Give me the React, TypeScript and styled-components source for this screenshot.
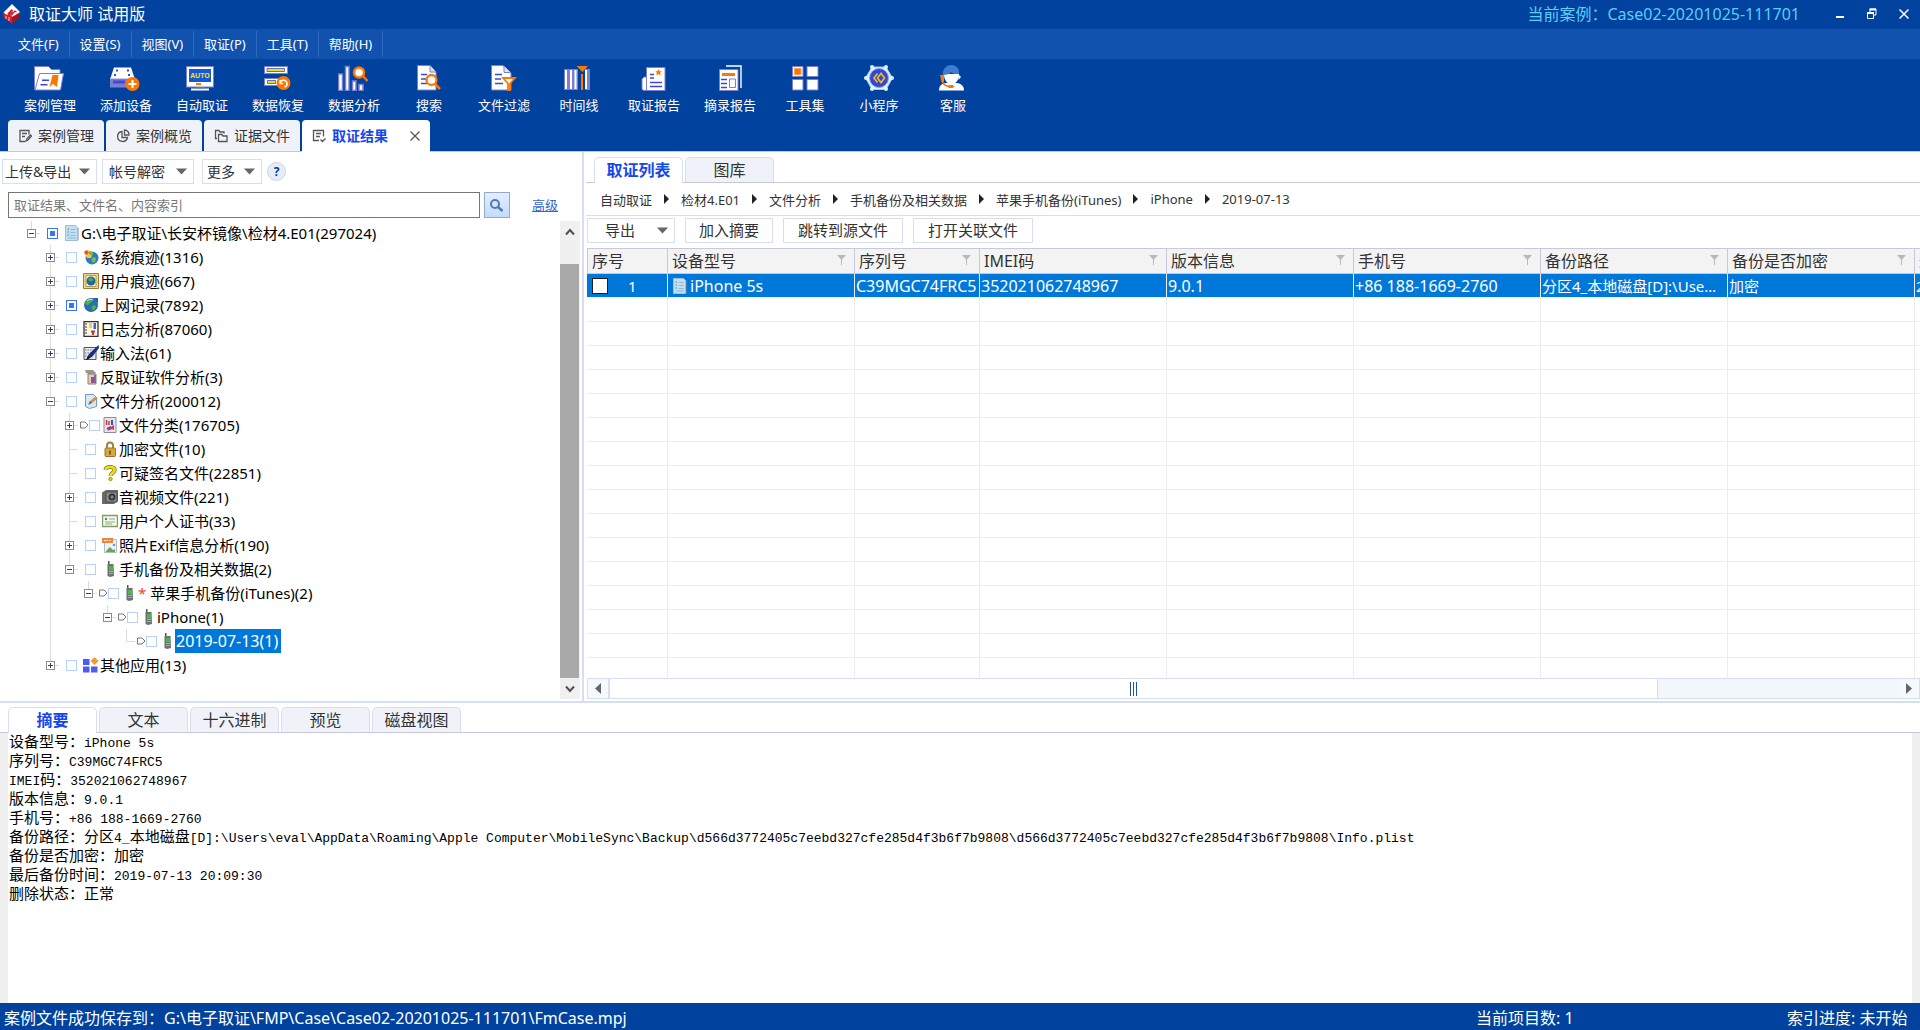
import React from 'react';
import styled, { createGlobalStyle, css } from 'styled-components';

const NAVY = '#00429e';
const LINE = '#d5dff1';
const GREY_LINE = '#c8c8dc';
const SELECT = '#0078d9';
const ACCENT = '#1447ee';

const Global = createGlobalStyle`
  *, *::before, *::after { box-sizing: border-box; }
  body { margin: 0; background: #fff; }
  body, button, input, table {
    font-family: "Noto Sans", "Noto Sans CJK SC", sans-serif;
  }
  button { border: 0; padding: 0; background: none; color: inherit; }
  svg { display: block; flex: none; }
`;

const Window = styled.div`
  display: flex;
  flex-direction: column;
  height: 100vh;
  overflow: hidden;
  color: #333;
`;

/* ---------- title, menu, toolbar ---------- */

const TitleBar = styled.header`
  display: flex;
  align-items: center;
  height: 29px;
  flex: none;
  padding: 0 0 2px 2px;
  background: ${NAVY};
  color: #fff;
  font-size: 16px;
  line-height: 26px;
`;
const AppName = styled.h1`
  margin: 0 auto 0 8px;
  font-size: 16px;
  font-weight: 400;
`;
const CaseName = styled.span`
  margin-right: 24px;
  color: #5ccdf8;
`;
const WinButton = styled.button`
  display: grid;
  place-items: center;
  width: 32px;
  height: 24px;
`;
const MenuBar = styled.nav`
  display: flex;
  align-items: center;
  height: 30px;
  flex: none;
  padding-left: 8px;
  background: #1152ae;
  color: #fff;
`;
const MenuItem = styled.button`
  height: 26px;
  padding: 0 10px;
  border-right: 1px solid #2d68bd;
  font-size: 13px;
  line-height: 26px;
`;
const ToolBar = styled.div`
  display: flex;
  height: 61px;
  flex: none;
  padding: 6px 0 0 12px;
  background: ${NAVY};
  color: #fff;
`;
const Tool = styled.button`
  display: flex;
  flex-direction: column;
  align-items: center;
  gap: 4px;
  min-width: 74px;
  padding: 0 12px;
  font-size: 13px;
  line-height: 20px;
  white-space: nowrap;
`;
const MainTabs = styled.div`
  display: flex;
  gap: 2px;
  height: 32px;
  flex: none;
  padding-left: 8px;
  border-bottom: 1px solid #b9c9e6;
  background: ${NAVY};
`;
const MainTab = styled.div<{ $active?: boolean }>`
  display: flex;
  align-items: center;
  gap: 6px;
  width: ${p => (p.$active ? 128 : 96)}px;
  padding-left: 10px;
  border-radius: 4px 4px 0 0;
  background: ${p => (p.$active ? '#fff' : '#eff3f9')};
  margin-bottom: ${p => (p.$active ? -1 : 0)}px;
`;
const MainTabLabel = styled.button<{ $active?: boolean }>`
  display: flex;
  align-items: center;
  gap: 6px;
  font-size: 14px;
  line-height: 30px;
  font-weight: ${p => (p.$active ? 700 : 400)};
  color: ${p => (p.$active ? ACCENT : '#333')};
  white-space: nowrap;
`;
const CloseTab = styled.button`
  margin: 0 10px 0 auto;
`;

/* ---------- workspace ---------- */

const Work = styled.main`
  display: grid;
  grid-template-columns: 584px minmax(0, 1fr);
  flex: 1;
  min-height: 0;
  border-bottom: 2px solid ${LINE};
`;
const LeftPane = styled.section`
  display: flex;
  flex-direction: column;
  min-height: 0;
  padding: 7px 2px 2px 0;
  border-right: 2px solid ${LINE};
`;
const LeftTools = styled.div`
  display: flex;
  align-items: center;
  gap: 5px;
  padding-left: 2px;
`;
const DropButton = styled.button<{ $w: number; $pad: number; $gap?: number }>`
  display: flex;
  align-items: center;
  justify-content: space-between;
  width: ${p => p.$w}px;
  height: 25px;
  margin-right: ${p => p.$gap ?? 0}px;
  padding: 0 6px 0 ${p => p.$pad}px;
  border: 1px solid ${LINE};
  background: #fff;
  font-size: 14px;
  line-height: 23px;
  white-space: nowrap;
`;
const Help = styled.button`
  width: 19px;
  height: 19px;
  border: 1px solid #c9d6ee;
  border-radius: 50%;
  background: #e6edf8;
  color: #003f9e;
  font-size: 12px;
  font-weight: 700;
  line-height: 17px;
`;
const SearchRow = styled.form`
  display: flex;
  align-items: center;
  gap: 4px;
  margin: 8px 22px 3px 8px;
`;
const SearchInput = styled.input`
  flex: 1;
  height: 26px;
  padding: 0 5px;
  border: 1px solid #777;
  font-size: 13px;
  &::placeholder { color: #777; opacity: 1; }
`;
const SearchButton = styled.button`
  display: grid;
  place-items: center;
  width: 26px;
  height: 26px;
  border: 1px solid #8fabd3;
  background: linear-gradient(#e4eeff, #c4dbff);
`;
const Advanced = styled.a`
  margin-left: 18px;
  color: #3465cf;
  font-size: 13px;
  line-height: 24px;
`;
const TreeWrap = styled.div`
  display: flex;
  flex: 1;
  min-height: 0;
`;
const Tree = styled.ul`
  flex: 1;
  margin: 0;
  padding: 0 0 0 22px;
  list-style: none;
  overflow: hidden;
`;
const TreeRow = styled.li`
  display: flex;
  align-items: center;
  height: 24px;
  color: #000;
`;
const stripe = 'linear-gradient(#dcdcdc, #dcdcdc)';
const guides = {
  none: 'none',
  full: `${stripe} 9px 0 / 1px 24px no-repeat`,
  tee: `${stripe} 9px 0 / 1px 24px no-repeat, ${stripe} 9px 12px / 9px 1px no-repeat`,
  end: `${stripe} 9px 0 / 1px 12px no-repeat, ${stripe} 9px 12px / 9px 1px no-repeat`,
};
const Guide = styled.span<{ $kind: keyof typeof guides }>`
  display: grid;
  place-items: center;
  flex: none;
  width: 19px;
  height: 24px;
  background: ${p => guides[p.$kind]};
`;
const Expander = styled.button`
  display: block;
  width: 9px;
  height: 9px;
  border: 1px solid #8c8c8c;
  background: #fff;
`;
const CheckSlot = styled.span<{ $flag?: boolean }>`
  display: flex;
  align-items: center;
  flex: none;
  width: 23px;
  padding-left: ${p => (p.$flag ? 1 : 6)}px;
`;
const TreeCheck = styled.input<{ $partial?: boolean }>`
  appearance: none;
  flex: none;
  width: 11px;
  height: 11px;
  margin: 0;
  border: 1px solid #b9cffb;
  background: #fff;
  ${p => p.$partial && css`
    border-color: #3a73fb;
    background: linear-gradient(#3a73fb, #3a73fb) center / 5px 5px no-repeat #fff;
  `}
`;
const TreeLabel = styled.label<{ $on?: boolean }>`
  padding: 0 3px 0 1px;
  font-size: ${p => (p.$on ? 16 : 15)}px;
  line-height: 24px;
  white-space: pre;
  ${p => p.$on && css`background: ${SELECT}; color: #fff;`}
`;
const Star = styled.span`
  color: #f23c3c;
`;
const VScroll = styled.div`
  display: flex;
  flex-direction: column;
  width: 20px;
  background: #f0f0f0;
`;
const VArrow = styled.button`
  display: grid;
  place-items: center;
  width: 19px;
  height: 21px;
`;
const VThumb = styled.div`
  flex: 1;
  width: 19px;
  margin-top: 22px;
  background: #a9a9a9;
`;

/* ---------- right pane ---------- */

const RightPane = styled.section`
  display: flex;
  flex-direction: column;
  min-width: 0;
  min-height: 0;
  padding: 5px 0 2px 2px;
`;
const Tabs = styled.div`
  display: flex;
  gap: 2px;
  height: 26px;
  flex: none;
  padding-left: 8px;
  border-bottom: 1px solid ${GREY_LINE};
`;
const Tab = styled.button<{ $active?: boolean }>`
  width: 89px;
  height: ${p => (p.$active ? 26 : 25)}px;
  border: 1px solid ${LINE};
  border-bottom: 0;
  border-radius: 5px 5px 0 0;
  background: ${p => (p.$active ? '#fff' : '#eff3f9')};
  color: ${p => (p.$active ? ACCENT : '#333')};
  font-size: 16px;
  font-weight: ${p => (p.$active ? 700 : 400)};
  line-height: 25px;
`;
const Crumbs = styled.nav`
  display: flex;
  align-items: center;
  gap: 12px;
  height: 33px;
  flex: none;
  padding-left: 14px;
  border-bottom: 1px solid ${LINE};
  font-size: 13px;
`;
const Crumb = styled.a`
  color: #333;
  text-decoration: none;
`;
const ListTools = styled.div`
  display: flex;
  gap: 10px;
  padding: 2px 0 5px 1px;
`;
const ListButton = styled.button<{ $w: number; $drop?: boolean }>`
  display: flex;
  align-items: center;
  justify-content: ${p => (p.$drop ? 'space-between' : 'center')};
  width: ${p => p.$w}px;
  height: 25px;
  padding: ${p => (p.$drop ? '0 6px 0 17px' : 0)};
  border: 1px solid ${LINE};
  font-size: 15px;
  line-height: 23px;
`;
const Grid = styled.div`
  flex: 1;
  min-height: 0;
  margin-left: 1px;
  overflow: hidden;
`;
const DataTable = styled.table`
  width: 1515px;
  table-layout: fixed;
  border-spacing: 0;
  th, td {
    padding: 0;
    overflow: hidden;
    text-align: left;
    white-space: nowrap;
    text-overflow: ellipsis;
  }
  th {
    height: 26px;
    padding: 0 8px 0 4px;
    border: solid ${GREY_LINE};
    border-width: 1px 1px 1px 0;
    background: #f3f3f3;
    font-size: 16px;
    font-weight: 400;
    line-height: 24px;
  }
  th:first-child { border-left-width: 1px; }
  td {
    height: 24px;
    border: solid #ededf0;
    border-width: 0 1px 1px 0;
  }
`;
const HeadCell = styled.div`
  display: flex;
  justify-content: space-between;
  align-items: center;
  svg { margin-bottom: 2px; }
`;
const DataRow = styled.tr`
  td {
    padding: 1px 6px 0 1px;
    background: ${SELECT};
    color: #fff;
    font-size: 15px;
    line-height: 22px;
  }
  td:nth-child(3) { padding-right: 0; }
`;
const Latin = styled.span`
  font-size: 16px;
`;
const CellFlex = styled.label<{ $gap: number; $pad: number }>`
  display: flex;
  align-items: center;
  gap: ${p => p.$gap}px;
  padding-left: ${p => p.$pad}px;
`;
const RowCheck = styled.input`
  appearance: none;
  width: 16px;
  height: 16px;
  margin: 0;
  border: 1px solid #222;
  background: #fff;
`;
const HScroll = styled.div`
  display: flex;
  height: 21px;
  flex: none;
  margin-left: 1px;
  border: 1px solid ${LINE};
`;
const HArrow = styled.button`
  display: grid;
  place-items: center;
  width: 20px;
  background: #f5f8fd;
`;
const HThumb = styled.div`
  display: flex;
  align-items: center;
  justify-content: center;
  gap: 2px;
  flex: 813;
  border: solid ${LINE};
  border-width: 0 1px 0 2px;
  background: #fff;
`;
const Grip = styled.i`
  width: 1px;
  height: 14px;
  background: #1a559f;
`;
const HTrack = styled.div`
  flex: 187;
  background: #f3f6fb;
`;

/* ---------- details and status ---------- */

const Details = styled.section`
  display: flex;
  flex-direction: column;
  height: 300px;
  flex: none;
  padding-top: 4px;
`;
const Summary = styled.div`
  flex: 1;
  padding: 1px 0 0 1px;
  border: solid #f0f0f0;
  border-width: 0 8px;
  color: #000;
  font-family: "Liberation Mono", "Noto Sans CJK SC", monospace;
  font-size: 15px;
`;
const SummaryLine = styled.p`
  height: 19px;
  margin: 0;
  line-height: 20px;
  white-space: pre;
`;
const Mono = styled.span`
  font-size: 13px;
`;
const Status = styled.footer`
  display: grid;
  grid-template-columns: minmax(0, 1fr) 311px 133px;
  height: 27px;
  flex: none;
  padding: 1px 0 0 4px;
  background: ${NAVY};
  color: #fff;
  font-size: 16px;
  line-height: 28px;
`;

/* ---------- drawings ---------- */

const Down = () => (
  <svg width="11" height="7" viewBox="0 0 11 7"><path d="M0 .5h11L5.500 6.500z" fill="#666" /></svg>
);
const Logo = () => (
  <svg width="19" height="20" viewBox="0 0 19 20">
    <path d="M1 10 10 1l8 8v4l-8 6.500L2 14z" fill="#d3202b" />
    <path d="M10 0 1.500 8.500 5 11l4-4 2 1.500L8.500 11l2 2 7.500-5z" fill="#fff" />
    <path d="m6 10 3.500-4 1.500 1.500M9 11.500 13 7l1.500 1" fill="none" stroke="#d3202b" strokeWidth="1.300" />
    <path d="M10 19v-6l8-4v4z" fill="#a5121d" />
    <path d="m4 12 0 3M7 13v4" stroke="#f4b9bd" fill="none" />
  </svg>
);
const B = '#3d49d0';
const P = '#7a80d0';
const O = '#ff7600';

const toolIcons: Record<string, React.ReactNode> = {
  case: <>
    <path d="M.5 25V1.500h14L17.500 4.500H26V9" fill="#fff" stroke={P} />
    <path d="M5.500 8.500h24L26.500 25H1z" fill="#fff" stroke={P} />
    <path d="M8 15.200h7M6.500 19.800h7" stroke={B} strokeWidth="1.500" />
    <path d="M18.500 10h6l-1.500 12-4-3-3.500 3z" fill={O} />
  </>,
  device: <>
    <path d="M4 2.500h17L24.500 13h-24z" fill="#fff" />
    <path d="M6 5.500h2M17 5.500h2M4 10h2M18 10h2" stroke={B} strokeWidth="2" />
    <path d="M0 13h25v9.500H0z" fill={P} />
    <path d="M0 13.500h25" stroke="#fff" strokeOpacity=".6" />
    <path d="M3 17h12" stroke={B} strokeWidth="3" />
    <circle cx="22.500" cy="19" r="7" fill={O} /><path d="M18.500 19h8M22.500 15v8" stroke="#fff" strokeWidth="2" />
  </>,
  auto: <>
    <rect x=".5" y="1.500" width="27" height="20.500" fill="#fff" stroke={P} />
    <rect x="3" y="4" width="22" height="13" fill="#1757dc" />
    <text x="14" y="12.500" fontSize="7" fontWeight="700" textAnchor="middle" fill="#e8e800">AUTO</text>
    <path d="M10 18h5v2h-5z" fill={O} /><path d="M5 24.500h18" stroke="#fff" strokeWidth="2" />
    <path d="M9 23h10" stroke={P} />
  </>,
  restore: <>
    <rect x="2.500" y="1.500" width="23" height="7" fill="#fff" stroke={P} /><path d="M5 5h17" stroke="#e6e022" strokeWidth="3" />
    <path d="M5 3.500h17.500v3H5z" fill="none" stroke={B} strokeWidth=".8" />
    <rect x="2.500" y="13.500" width="16" height="7" fill="#fff" stroke={P} /><path d="M5.500 15.500h8v3h-8z" fill="#e6e022" stroke={B} strokeWidth=".8" />
    <circle cx="21.500" cy="18" r="7" fill={O} />
    <path d="M18 18.500a3.500 3.500 0 1 1 4.500 3.500M18 15v3.500h3" fill="none" stroke="#fff" strokeWidth="1.500" />
  </>,
  analyse: <>
    <path d="M.5 9h4v16.500h-4zM7.500 1.500h3.500v24H7.500zM14.500 16h3.500v9.500h-3.500zM21 19.500h4v6h-4z" fill="#fff" stroke={P} strokeWidth="1.500" />
    <path d="m25 11 4.500 5" stroke={O} strokeWidth="2.500" />
    <circle cx="21" cy="7.500" r="5" fill="#fff" stroke={O} strokeWidth="2.500" />
  </>,
  search: <>
    <path d="M4.500.5H17l6 6.500V25H4.500z" fill="#fff" stroke={P} /><path d="M17 .5V7h6" fill="#dfe2f8" stroke={P} />
    <path d="M8 9.500h6M8 14h5M8 18.500h6" stroke={B} strokeWidth="1.600" />
    <path d="m22 19 5 5" stroke={O} strokeWidth="2.500" />
    <circle cx="18.500" cy="15" r="5" fill="#fff" stroke={O} strokeWidth="2.300" />
  </>,
  filter: <>
    <path d="M3.500.5H15L23 8v17H3.500z" fill="#fff" stroke={P} /><path d="M16 1v6.500h6.500" fill="#dfe2f8" stroke={P} />
    <path d="M7 9.500h7M7 14h6M7 18.500h8" stroke={B} strokeWidth="1.600" />
    <path d="M15 13h12l-5 5.500V25h-2v-6.500z" fill="#fff" stroke={O} strokeWidth="1.800" />
  </>,
  timeline: <>
    <path d="M1 4h26v21H1z" fill={P} />
    <path d="M3 5v19M8 5v19M12.500 5v19M23 5v19" stroke="#fff" strokeWidth="2" />
    <path d="M15 4h7v21h-7z" fill={NAVY} />
    <path d="M13.500 1H25l-5.500 6z" fill={O} /><path d="M19 9v16" stroke={O} strokeWidth="2" />
  </>,
  report: <>
    <path d="M8.500 25.500H6a2 2 0 0 1-2-2V14l2-2h3" fill="#fff" stroke={P} />
    <path d="M8.500 2.500H27v23H8.500z" fill="#fff" stroke={P} />
    <path d="M12 9.500h4M12 13h4M12 17.500h12M12 21.500h12" stroke={B} strokeWidth="1.600" />
    <path d="m20.500 4 1 2.300h2.300l-1.800 1.600.7 2.500-2.200-1.400-2.200 1.400.7-2.500L17.200 6.300h2.300z" fill={O} />
  </>,
  extract: <>
    <path d="M12 1h15v22" fill="none" stroke="#fff" strokeWidth="1.400" />
    <path d="M5.500 4.500h18.500v21H5.500z" fill="#fff" stroke={P} /><path d="M8 9.500h13" stroke={O} strokeWidth="3" />
    <path d="M7 14.500h6M7 18.500h6M7 22.500h6" stroke={B} strokeWidth="1.600" />
    <path d="M15.500 14h6v8.500h-6z" fill="none" stroke={P} />
  </>,
  tools: <>
    <path d="M3.500 1.500h10.500v10H3.500zM18 1.500h11v10H18zM3.500 14.500h10.500v10.500H3.500zM18 14.500h11v10.500H18z" fill="#fff" stroke={P} />
    <path d="M5.500 3.500h6.500v6H5.500z" fill={O} stroke="#ff9d47" />
  </>,
  mini: <>
    <path d="M9 2h14l6.500 11L23 24.500H9L2.500 13z" fill="#eef3ff" stroke="#9fc4ff" strokeWidth="1" />
    <circle cx="16" cy="13" r="9.500" fill="#2f49d6" stroke="#8fa2ee" />
    <path d="M14.500 8.500 11 13l3.500 4.500M18 8.500 14.500 13l3.500 4.500 3.500-4.500z" fill="none" stroke="#f5b81c" strokeWidth="1.700" />
    {[[9, 2], [23, 2], [29, 13], [23, 24], [9, 24], [3, 13]].map(([x, y]) => <circle key={`${x}-${y}`} cx={x} cy={y} r="2" fill="#d7f4ff" />)}
  </>,
  support: <>
    <path d="M2 25.500c0-5 3-7 7-7.500h11c4 .5 7 3 7 7.500z" fill="#fff" />
    <path d="M7 9c0 6 3 10 7.500 10S22 15 22 9z" fill="#fff" />
    <path d="M5.500 10C6 3 10 0 14.500 0 19 0 23 3.500 22 9c-5 .5-7-1-8-2-1 2-4 3-8.500 3z" fill="#3f7bd0" />
    <path d="M3 10h4v7H4.500z" fill={O} /><path d="M21.500 9.500 24 12l-2.500 3z" fill="#fff" />
    <path d="M5 16c1 4 4 5 7 5.500" fill="none" stroke={O} strokeWidth="1.300" /><rect x="11" y="20" width="6" height="3" rx="1.500" fill={O} />
  </>,
};

const Doc = () => (
  <svg width="16" height="16" viewBox="0 0 16 16">
    <path d="M1.500.5h10l2 2v13h-12z" fill="#c3dff0" stroke="#9dbfd4" />
    <path d="M3.500 4H5M3.500 7H5M3.500 10H5" stroke="#3f8f8f" /><path d="M6.500 4.500h5M6.500 7.500h5M6.500 10.500h5M4 13h8" stroke="#8fb9da" />
    <path d="M14.500 3v12.500" stroke="#6d8ba0" strokeOpacity=".5" />
  </svg>
);
const Phone = () => <>
  <path d="M6 0h1.500v4H6z" fill="#555" /><path d="M5.500 3h6l.5 12-4 1-2.500-1z" fill="#6b7176" />
  <path d="M7 5h4v4.500H7z" fill="#4fb54b" /><path d="M7 10.500h4M7 12.500h4" stroke="#aab" />
</>;
const globe = <><circle cx="8" cy="8" r="7" fill="#2a6db5" /><path d="M3 4c3-3 5-2 6-1s-1 3-2 3-1 3-3 2-2-2-1-4zM9 9c2-1 4-1 4 1s-2 3-3 3-2-3-1-4z" fill="#52b04a" /><path d="M4 4c2-2 4-2 6-1" stroke="#cfe8ff" fill="none" /></>;

const treeIcons: Record<string, React.ReactNode> = {
  system: <><circle cx="9" cy="9" r="6.500" fill="#2f78c4" /><path d="M9 9c2-1 4-1 4 1s-2 4-3 4-2-4-1-5z" fill="#6cc04e" /><path d="M1 3c3-3 6-2 9 1L8 9 4 9z" fill="#efcf3f" /><path d="m1 3 3-2 2 3-3 2z" fill="#e2572c" /><path d="m6 2 4 1-1 4-3-2z" fill="#79b83a" /></>,
  user: <><path d="M.5.5h15v15H.5z" fill="#ecd68a" stroke="#9c7f35" /><path d="M3 2.500h10v11H3z" fill="#f5f3da" stroke="#b59a50" /><circle cx="8" cy="8" r="4.500" fill="#28649e" /><path d="M5 6c2-2 4-2 5 0s-2 3-4 2z" fill="#4fa855" /></>,
  web: <>{globe}<path d="M9 1h6v6c-1-3-3-5-6-6z" fill="#2b5f8f" /></>,
  log: <><path d="M1 .5h14v15H1z" fill="#fbf7e6" stroke="#333" strokeWidth="1.300" /><path d="M3 2v12" stroke="#333" strokeDasharray="2 1" /><path d="M6 2h3v5H6z" fill="#f1d437" /><path d="M10.500 2h2.500v6h-2.500z" fill="#3a62cb" /><path d="M8 9.500h4v2H8zM9 11h2v3H9z" fill="#c53737" /></>,
  input: <><path d="M1 2.500h12v12H1z" fill="#e8e8ee" stroke="#555" /><path d="M2 5h9M2 8h9M2 11h6" stroke="#777" strokeDasharray="1.500 1" /><path d="M15.500 0 6 9l-3 6 6-3L16 3z" fill="#12308e" /><path d="m3 15 2-4 2 2z" fill="#111" /></>,
  anti: <><path d="M2 1h8l3 3-2 1H6l-3-1z" fill="#9a978b" /><path d="M5 5h8v10H5z" fill="#d8d0c0" stroke="#8a8072" /><path d="M8 8h3v6H8z" fill="#c0406c" /><path d="M11 6h2v8h-2z" fill="#6f69b9" /></>,
  file: <><path d="M2.500 1.500h8l3 3v9l-7 2-4-2z" fill="#d5e9f7" stroke="#6d9ac4" /><path d="m6 9 6-5 3 1-6 5z" fill="#d88c3a" /><path d="m5 12 4-2-2-2z" fill="#3a6fb0" /></>,
  kinds: <><path d="M2 .5h12v15H2z" fill="#e4e6ee" stroke="#8b8d9c" /><path d="M4.500 3v5M7 4v4" fill="none" stroke="#e03535" strokeWidth="1.500" /><path d="M10 3v5M5 12l4-2" stroke="#3a50cf" strokeWidth="2" fill="none" /><path d="m7 11 5-3v5l-2-1-4 2z" fill="#e03535" /></>,
  lock: <><path d="M5 8V4.500a3 3 0 0 1 6 0V8" fill="none" stroke="#a9823a" strokeWidth="2" /><rect x="3" y="7" width="10.500" height="8.500" rx="1" fill="#d8a83c" stroke="#9a7426" /><path d="M8 9.500v4" stroke="#6a4d14" strokeWidth="1.500" /></>,
  ask: <><path d="M3.500 5C4 1.500 7 2 8.500 2c3 0 4.500 1.500 4 3.500C12 8 8.500 8 8.500 11" fill="none" stroke="#77721a" strokeWidth="4" /><path d="M3.500 5C4 1.500 7 2 8.500 2c3 0 4.500 1.500 4 3.500C12 8 8.500 8 8.500 11" fill="none" stroke="#eae01c" strokeWidth="2.600" /><circle cx="8.500" cy="14" r="1.800" fill="#d8cd14" stroke="#77721a" strokeWidth=".6" /></>,
  camera: <><path d="M0 3.500 4 1h12v11l-4 3H0z" fill="#6a6a6a" /><path d="M4 3h11v10H4z" fill="#8d8d8d" stroke="#4a4a4a" /><circle cx="10" cy="8" r="3.500" fill="#333" /><circle cx="10" cy="8" r="1.700" fill="#6f86a0" /></>,
  cert: <><path d="M.5 2.500h15v11H.5z" fill="#f4f8ea" stroke="#7f9e6f" strokeWidth="1.400" /><circle cx="4" cy="6" r="1.200" fill="#4a9a4a" /><path d="M7 6h6M3 9h10M3 11h7" stroke="#94a68c" /></>,
  exif: <><path d="M2.500 2.500h12v13h-12z" fill="#eaf4fa" stroke="#a9bccb" /><path d="M0 1h11v5H0z" fill="#ee8440" /><path d="M2 3.500h7" stroke="#fff" strokeDasharray="1.500 1" /><path d="m4 14 4-4 3 3 2-1v3H4z" fill="#79a33f" /><circle cx="12" cy="8" r="1.300" fill="#58a8dc" /></>,
  phone: <Phone />,
  other: <><path d="M0 2h6.500v6H0zM0 9.500h6.500v6H0zM8 9.500h6.500v6H8z" fill="#4a5cf2" /><path d="m11.500 0 4 4-4 4-4-4z" fill="#f59a2c" /></>,
};

/* ---------- data ---------- */

const tools = [
  ['case', '案例管理'], ['device', '添加设备'], ['auto', '自动取证'], ['restore', '数据恢复'],
  ['analyse', '数据分析'], ['search', '搜索'], ['filter', '文件过滤'], ['timeline', '时间线'],
  ['report', '取证报告'], ['extract', '摘录报告'], ['tools', '工具集'], ['mini', '小程序'], ['support', '客服'],
];

type G = keyof typeof guides;
type Node = { g: G[]; box?: '+' | '-'; icon: string; text: string; partial?: boolean; flag?: boolean; star?: boolean; on?: boolean };
const nodes: Node[] = [
  { g: ['end'], box: '-', icon: 'doc', text: 'G:\\电子取证\\长安杯镜像\\检材4.E01(297024)', partial: true },
  { g: ['none', 'tee'], box: '+', icon: 'system', text: '系统痕迹(1316)' },
  { g: ['none', 'tee'], box: '+', icon: 'user', text: '用户痕迹(667)' },
  { g: ['none', 'tee'], box: '+', icon: 'web', text: '上网记录(7892)', partial: true },
  { g: ['none', 'tee'], box: '+', icon: 'log', text: '日志分析(87060)' },
  { g: ['none', 'tee'], box: '+', icon: 'input', text: '输入法(61)' },
  { g: ['none', 'tee'], box: '+', icon: 'anti', text: '反取证软件分析(3)' },
  { g: ['none', 'tee'], box: '-', icon: 'file', text: '文件分析(200012)' },
  { g: ['none', 'full', 'tee'], box: '+', icon: 'kinds', text: '文件分类(176705)', flag: true },
  { g: ['none', 'full', 'tee'], icon: 'lock', text: '加密文件(10)' },
  { g: ['none', 'full', 'tee'], icon: 'ask', text: '可疑签名文件(22851)' },
  { g: ['none', 'full', 'tee'], box: '+', icon: 'camera', text: '音视频文件(221)' },
  { g: ['none', 'full', 'tee'], icon: 'cert', text: '用户个人证书(33)' },
  { g: ['none', 'full', 'tee'], box: '+', icon: 'exif', text: '照片Exif信息分析(190)' },
  { g: ['none', 'full', 'end'], box: '-', icon: 'phone', text: '手机备份及相关数据(2)' },
  { g: ['none', 'full', 'none', 'end'], box: '-', icon: 'phone', text: '苹果手机备份(iTunes)(2)', flag: true, star: true },
  { g: ['none', 'full', 'none', 'none', 'end'], box: '-', icon: 'phone', text: 'iPhone(1)', flag: true },
  { g: ['none', 'full', 'none', 'none', 'none', 'end'], icon: 'phone', text: '2019-07-13(1)', flag: true, on: true },
  { g: ['none', 'end'], box: '+', icon: 'other', text: '其他应用(13)' },
];

const columns: [string, number][] = [
  ['序号', 81], ['设备型号', 187], ['序列号', 125], ['IMEI码', 187], ['版本信息', 187],
  ['手机号', 187], ['备份路径', 187], ['备份是否加密', 187], ['最后备份时间', 187],
];
const crumbs = ['自动取证', '检材4.E01', '文件分析', '手机备份及相关数据', '苹果手机备份(iTunes)', 'iPhone', '2019-07-13'];
const summary = [
  '设备型号：iPhone 5s',
  '序列号：C39MGC74FRC5',
  'IMEI码：352021062748967',
  '版本信息：9.0.1',
  '手机号：+86 188-1669-2760',
  '备份路径：分区4_本地磁盘[D]:\\Users\\eval\\AppData\\Roaming\\Apple Computer\\MobileSync\\Backup\\d566d3772405c7eebd327cfe285d4f3b6f7b9808\\d566d3772405c7eebd327cfe285d4f3b6f7b9808\\Info.plist',
  '备份是否加密：加密',
  '最后备份时间：2019-07-13 20:09:30',
  '删除状态：正常',
];

/* Latin runs are set smaller than the Chinese text so that two letters take one ideograph's width. */
const monoRuns = (line: string) =>
  line.split(/([\x20-\x7e]+)/).filter(Boolean).map((run, i) =>
    /^[\x20-\x7e]/.test(run) ? <Mono key={i}>{run}</Mono> : run);

const tabIcon = (d: string) => (
  <svg width="14" height="14" viewBox="0 0 14 14" fill="none" stroke="#555" strokeWidth="1.300"><path d={d} /></svg>
);

export default function App() {
  return (
    <Window>
      <Global />
      <TitleBar>
        <Logo />
        <AppName>取证大师 试用版</AppName>
        <CaseName>当前案例：Case02-20201025-111701</CaseName>
        <WinButton aria-label="最小化"><svg width="10" height="10" viewBox="0 0 10 10"><path d="M1 8h8" stroke="#fff" strokeWidth="2" /></svg></WinButton>
        <WinButton aria-label="还原">
          <svg width="10" height="11" viewBox="0 0 10 11" fill="none" stroke="#fff"><path d="M3 4V1h6v6H7" /><path d="M2.500 1.500H9" strokeWidth="2" /><path d="M.5 4.500h6v6h-6z" /><path d="M0 5h7" strokeWidth="2" /></svg>
        </WinButton>
        <WinButton aria-label="关闭"><svg width="10" height="10" viewBox="0 0 10 10"><path d="m.5.5 9 9m0-9-9 9" stroke="#fff" strokeWidth="1.500" /></svg></WinButton>
      </TitleBar>
      <MenuBar>
        {['文件(F)', '设置(S)', '视图(V)', '取证(P)', '工具(T)', '帮助(H)'].map(m => <MenuItem key={m}>{m}</MenuItem>)}
      </MenuBar>
      <ToolBar>
        {tools.map(([id, name]) => (
          <Tool key={id}><svg width="32" height="26" viewBox="0 0 32 26">{toolIcons[id]}</svg>{name}</Tool>
        ))}
      </ToolBar>
      <MainTabs>
        <MainTab><MainTabLabel>{tabIcon('M7 12.500H2v-11h9v4M4 4.500h5M4 7.500h3M8 12l1-2.500 3.500-3.500 1 1L10 11z')}案例管理</MainTabLabel></MainTab>
        <MainTab><MainTabLabel>{tabIcon('M6 2.500a5 5 0 1 0 5.500 6H6zM8.500 1v5h4.500a4.500 4.500 0 0 0-4.500-5z')}案例概览</MainTabLabel></MainTab>
        <MainTab><MainTabLabel>{tabIcon('M3 9.500H1.500v-8H5L6 3h4v1.500M4.500 5.500H8L9 7h4v5.500H4.500z')}证据文件</MainTabLabel></MainTab>
        <MainTab $active>
          <MainTabLabel $active>{tabIcon('M7 11.500H1.500v-10h10v6M4 4.500h5M4 7.500h4M8.500 10.500l2 2 3-3')}取证结果</MainTabLabel>
          <CloseTab aria-label="关闭标签"><svg width="10" height="10" viewBox="0 0 10 10"><path d="m.5.5 9 9m0-9-9 9" stroke="#555" strokeWidth="1.200" /></svg></CloseTab>
        </MainTab>
      </MainTabs>

      <Work>
        <LeftPane>
          <LeftTools>
            <DropButton $w={95} $pad={2}>上传&amp;导出<Down /></DropButton>
            <DropButton $w={92} $pad={6} $gap={3}>帐号解密<Down /></DropButton>
            <DropButton $w={60} $pad={4}>更多<Down /></DropButton>
            <Help>?</Help>
          </LeftTools>
          <SearchRow onSubmit={e => e.preventDefault()}>
            <SearchInput aria-label="搜索" placeholder="取证结果、文件名、内容索引" />
            <SearchButton aria-label="搜索">
              <svg width="13" height="13" viewBox="0 0 13 13" fill="none" stroke="#5379b5" strokeWidth="2"><circle cx="5" cy="5" r="4" /><path d="m8 8 4.500 4" strokeWidth="2.500" /></svg>
            </SearchButton>
            <Advanced href="#advanced">高级</Advanced>
          </SearchRow>
          <TreeWrap>
            <Tree>
              {nodes.map((n, i) => (
                <TreeRow key={i}>
                  {n.g.map((kind, k) => (
                    <Guide key={k} $kind={kind}>
                      {k === n.g.length - 1 && n.box && (
                        <Expander aria-label={n.box === '+' ? '展开' : '折叠'}>
                          <svg width="7" height="7" viewBox="0 0 7 7"><path d={n.box === '+' ? 'M1 3.500h5M3.500 1v5' : 'M1 3.500h5'} stroke="#26407c" /></svg>
                        </Expander>
                      )}
                    </Guide>
                  ))}
                  <CheckSlot $flag={n.flag}>
                    {n.flag && <svg width="9" height="8" viewBox="0 0 9 8"><path d="M.5 1H5l3 3-3 3H.5z" fill="#fff" stroke="#777" /></svg>}
                    <TreeCheck type="checkbox" id={`node-${i}`} $partial={n.partial} />
                  </CheckSlot>
                  {n.icon === 'doc' ? <Doc /> : <svg width="16" height="16" viewBox="0 0 16 16">{treeIcons[n.icon]}</svg>}
                  <TreeLabel htmlFor={`node-${i}`} $on={n.on}>{n.star && <Star>* </Star>}{n.text}</TreeLabel>
                </TreeRow>
              ))}
            </Tree>
            <VScroll>
              <VArrow aria-label="向上"><svg width="10" height="8" viewBox="0 0 10 8"><path d="m1 6.500 4-4.500 4 4.500" fill="none" stroke="#505050" strokeWidth="2" /></svg></VArrow>
              <VThumb />
              <VArrow aria-label="向下"><svg width="10" height="8" viewBox="0 0 10 8"><path d="m1 1.500 4 4.500 4-4.500" fill="none" stroke="#505050" strokeWidth="2" /></svg></VArrow>
            </VScroll>
          </TreeWrap>
        </LeftPane>

        <RightPane>
          <Tabs><Tab $active>取证列表</Tab><Tab>图库</Tab></Tabs>
          <Crumbs>
            {crumbs.map((c, i) => (
              <React.Fragment key={c}>
                {i > 0 && <svg width="5" height="10" viewBox="0 0 5 10"><path d="M0 0v10l5-5z" fill="#222" /></svg>}
                <Crumb href="#crumb">{c}</Crumb>
              </React.Fragment>
            ))}
          </Crumbs>
          <ListTools>
            <ListButton $w={88} $drop>导出<Down /></ListButton>
            <ListButton $w={88}>加入摘要</ListButton>
            <ListButton $w={120}>跳转到源文件</ListButton>
            <ListButton $w={120}>打开关联文件</ListButton>
          </ListTools>
          <Grid>
            <DataTable>
              <colgroup>{columns.map(([name, w]) => <col key={name} width={w} />)}</colgroup>
              <thead>
                <tr>
                  {columns.map(([name], i) => (
                    <th key={name}><HeadCell>{name}{i > 0 && <svg width="9" height="10" viewBox="0 0 9 10"><path d="M0 0h9L5 4.500V10H4V4.500z" fill="#b9b9b9" /></svg>}</HeadCell></th>
                  ))}
                </tr>
              </thead>
              <tbody>
                <DataRow>
                  <td><CellFlex $gap={20} $pad={4}><RowCheck type="checkbox" />1</CellFlex></td>
                  <td><CellFlex as="div" $gap={2} $pad={3}><Doc /><Latin>iPhone 5s</Latin></CellFlex></td>
                  <td><Latin>C39MGC74FRC5</Latin></td>
                  <td><Latin>352021062748967</Latin></td>
                  <td><Latin>9.0.1</Latin></td>
                  <td><Latin>+86 188-1669-2760</Latin></td>
                  <td>分区4_本地磁盘[D]:\Users\eval\AppData</td>
                  <td>加密</td>
                  <td>2019-07-13 20:09:30</td>
                </DataRow>
                {Array.from({ length: 16 }, (_, r) => (
                  <tr key={r}>{columns.map(([name]) => <td key={name} />)}</tr>
                ))}
              </tbody>
            </DataTable>
          </Grid>
          <HScroll>
            <HArrow aria-label="向左"><svg width="6" height="11" viewBox="0 0 6 11"><path d="M6 0v11L0 5.500z" fill="#666" /></svg></HArrow>
            <HThumb><Grip /><Grip /><Grip /></HThumb>
            <HTrack />
            <HArrow aria-label="向右"><svg width="6" height="11" viewBox="0 0 6 11"><path d="M0 0v11l6-5.500z" fill="#666" /></svg></HArrow>
          </HScroll>
        </RightPane>
      </Work>

      <Details>
        <Tabs>
          <Tab $active>摘要</Tab><Tab>文本</Tab><Tab>十六进制</Tab><Tab>预览</Tab><Tab>磁盘视图</Tab>
        </Tabs>
        <Summary>
          {summary.map(line => <SummaryLine key={line}>{monoRuns(line)}</SummaryLine>)}
        </Summary>
      </Details>

      <Status>
        <span>案例文件成功保存到：G:\电子取证\FMP\Case\Case02-20201025-111701\FmCase.mpj</span>
        <span>当前项目数: 1</span>
        <span>索引进度: 未开始</span>
      </Status>
    </Window>
  );
}
